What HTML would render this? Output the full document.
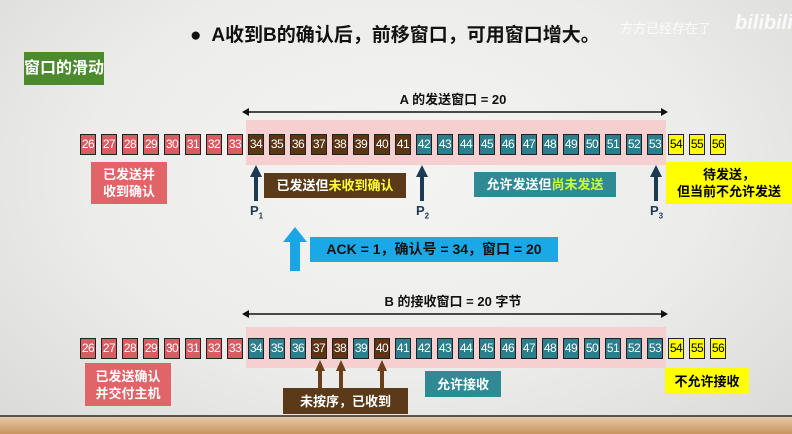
<!DOCTYPE html>
<html><head><meta charset="utf-8"><style>
*{margin:0;padding:0;box-sizing:border-box}
body{width:792px;height:434px;overflow:hidden;position:relative;font-family:"Liberation Sans","Noto Sans CJK SC",sans-serif;font-weight:bold;background:radial-gradient(ellipse at 50% 40%,#f4f4f2 0%,#ececea 55%,#d9d9d7 100%)}
.a{position:absolute}
.row{position:absolute;left:80px;display:flex;gap:5px}
.c{width:16px;height:21px;border:1px solid #222;color:#fff;font-size:12px;line-height:19px;text-align:center;font-weight:normal;letter-spacing:-0.5px}
.r{background:#d95c62}.b{background:#5b3514}.t{background:#2b7e8b}.y{background:#ffff00;color:#000}
.lbl{position:absolute;color:#fff;font-size:13px;text-align:center;display:flex;align-items:center;justify-content:center;line-height:17px;white-space:nowrap}
</style></head><body>
<div class="a" style="left:0;top:415px;width:792px;height:19px;background:linear-gradient(#e7c9a6,#c8925e);border-top:2px solid #555"></div>
<div class="a" style="left:190px;top:20px;font-size:19px;color:#111;white-space:nowrap">●&nbsp; A收到B的确认后，前移窗口，可用窗口增大。</div>
<div class="a" style="left:620px;top:18px;font-size:13px;color:rgba(255,255,255,.8);font-weight:normal">方方已经存在了</div>
<div class="a" style="left:735px;top:12px;font-size:20px;color:rgba(255,255,255,.8);font-style:italic">bilibili</div>
<div class="a" style="left:24px;top:52px;width:80px;height:33px;background:#4b8a2d;color:#fff;font-size:16px;line-height:33px;text-align:center;white-space:nowrap">窗口的滑动</div>

<div class="a" style="left:0;width:906px;top:89px;text-align:center;font-size:13px;color:#111">A 的发送窗口 = 20</div>
<svg class="a" style="left:240px;top:106px" width="430" height="12"><line x1="6" y1="6" x2="424" y2="6" stroke="#111" stroke-width="1.5"/><path d="M2 6l7-4v8zM428 6l-7-4v8z" fill="#111"/></svg>
<div class="a" style="left:246px;top:120px;width:420px;height:45px;background:#f6cfd0"></div>
<div class="row" style="top:134px">
<div class="c r">26</div><div class="c r">27</div><div class="c r">28</div><div class="c r">29</div><div class="c r">30</div><div class="c r">31</div><div class="c r">32</div><div class="c r">33</div><div class="c b">34</div><div class="c b">35</div><div class="c b">36</div><div class="c b">37</div><div class="c b">38</div><div class="c b">39</div><div class="c b">40</div><div class="c b">41</div><div class="c t">42</div><div class="c t">43</div><div class="c t">44</div><div class="c t">45</div><div class="c t">46</div><div class="c t">47</div><div class="c t">48</div><div class="c t">49</div><div class="c t">50</div><div class="c t">51</div><div class="c t">52</div><div class="c t">53</div><div class="c y">54</div><div class="c y">55</div><div class="c y">56</div></div>
<div class="lbl" style="left:91px;top:162px;width:76px;height:42px;background:#e06468">已发送并<br>收到确认</div>
<div class="lbl" style="left:264px;top:173px;width:142px;height:25px;background:#5b3a19">已发送但<span style="color:#ffff33">未收到确认</span></div>
<div class="lbl" style="left:474px;top:172px;width:142px;height:25px;background:#2f8a96">允许发送但<span style="color:#ccff33">尚未发送</span></div>
<div class="lbl" style="left:666px;top:162px;width:126px;height:42px;background:#ffff00;color:#000">待发送，<br>但当前不允许发送</div>
<div class="a" style="left:250px;top:203px;font-size:13px;color:#1b3b55">P<sub style="font-size:8px">1</sub></div>
<div class="a" style="left:416px;top:203px;font-size:13px;color:#1b3b55">P<sub style="font-size:8px">2</sub></div>
<div class="a" style="left:650px;top:203px;font-size:13px;color:#1b3b55">P<sub style="font-size:8px">3</sub></div>
<div class="lbl" style="left:310px;top:237px;width:248px;height:25px;background:#1aa9e6;color:#111;font-size:14px">ACK = 1，确认号 = 34，窗口 = 20</div>

<div class="a" style="left:0;width:906px;top:291px;text-align:center;font-size:13px;color:#111">B 的接收窗口 = 20 字节</div>
<svg class="a" style="left:240px;top:308px" width="430" height="12"><line x1="6" y1="6" x2="424" y2="6" stroke="#111" stroke-width="1.5"/><path d="M2 6l7-4v8zM428 6l-7-4v8z" fill="#111"/></svg>
<div class="a" style="left:246px;top:327px;width:420px;height:41px;background:#f6cfd0"></div>
<div class="row" style="top:338px">
<div class="c r">26</div><div class="c r">27</div><div class="c r">28</div><div class="c r">29</div><div class="c r">30</div><div class="c r">31</div><div class="c r">32</div><div class="c r">33</div><div class="c t">34</div><div class="c t">35</div><div class="c t">36</div><div class="c b">37</div><div class="c b">38</div><div class="c t">39</div><div class="c b">40</div><div class="c t">41</div><div class="c t">42</div><div class="c t">43</div><div class="c t">44</div><div class="c t">45</div><div class="c t">46</div><div class="c t">47</div><div class="c t">48</div><div class="c t">49</div><div class="c t">50</div><div class="c t">51</div><div class="c t">52</div><div class="c t">53</div><div class="c y">54</div><div class="c y">55</div><div class="c y">56</div></div>
<div class="lbl" style="left:85px;top:363px;width:86px;height:43px;background:#e06468">已发送确认<br>并交付主机</div>
<div class="lbl" style="left:283px;top:388px;width:125px;height:26px;background:#5b3a19">未按序，已收到</div>
<div class="lbl" style="left:425px;top:371px;width:76px;height:26px;background:#2f8a96">允许接收</div>
<div class="lbl" style="left:665px;top:368px;width:84px;height:26px;background:#ffff00;color:#000">不允许接收</div>
<svg class="a" style="left:0;top:0" width="792" height="434">
<g fill="#1b3b55"><path d="M256 165l-6 12h4v24h4v-24h4z"/><path d="M422 165l-6 12h4v24h4v-24h4z"/><path d="M656 165l-6 12h4v24h4v-24h4z"/></g>
<path d="M295 227l-12 15h7v29h10v-29h7z" fill="#1aa5e6"/>
<g fill="#6b3f1c"><path d="M320 360l-5 11h3v18h4v-18h3z"/><path d="M341 360l-5 11h3v18h4v-18h3z"/><path d="M382 360l-5 11h3v18h4v-18h3z"/></g>
</svg>
</body></html>
